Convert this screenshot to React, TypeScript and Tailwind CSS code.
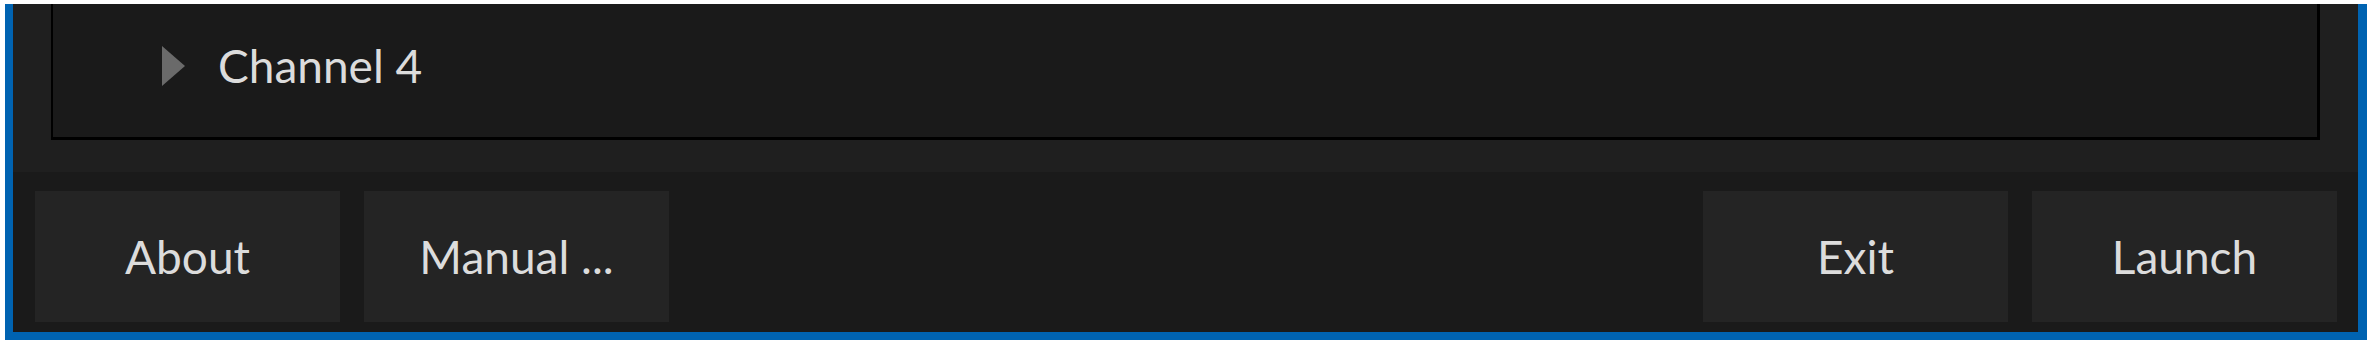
import React from "react";

const buttonClass =
  "w-[305px] h-[131px] bg-[#242424] flex items-center justify-center text-[46px] text-[#dcdcdc] leading-none";

const App = () => {
  return (
    <div
      className="w-[2372px] h-[345px] bg-white pt-[4px] px-[5px] pb-[5px]"
      style={{ fontFamily: 'Lato, "Open Sans", sans-serif' }}
    >
      <div className="h-full flex flex-col bg-[#1f1f1f] border-l-[8px] border-r-[9px] border-b-[8px] border-[#0063b1]">
        {/* channel list */}
        <div className="px-[38px] pb-[32px]">
          <div className="h-[136px] bg-[#1a1a1a] border-l-[2px] border-r-[3px] border-b-[3px] border-black">
            <div className="flex items-center h-[124px] pl-[109px]">
              <svg width="23" height="40" viewBox="0 0 23 40" className="mr-[33px]">
                <polygon points="0,0 23,20 0,40" fill="#6a6a6a" />
              </svg>
              <span className="text-[46px] text-[#dcdcdc] leading-none">Channel 4</span>
            </div>
          </div>
        </div>

        {/* bottom buttons */}
        <div className="flex-1 bg-[#1a1a1a] pt-[19px] pl-[22px] pr-[21px] flex justify-between">
          <div className="flex gap-[24px]">
            <button className={buttonClass}>About</button>
            <button className={buttonClass}>Manual ...</button>
          </div>
          <div className="flex gap-[24px]">
            <button className={buttonClass}>Exit</button>
            <button className={buttonClass}>Launch</button>
          </div>
        </div>
      </div>
    </div>
  );
};

export default App;
